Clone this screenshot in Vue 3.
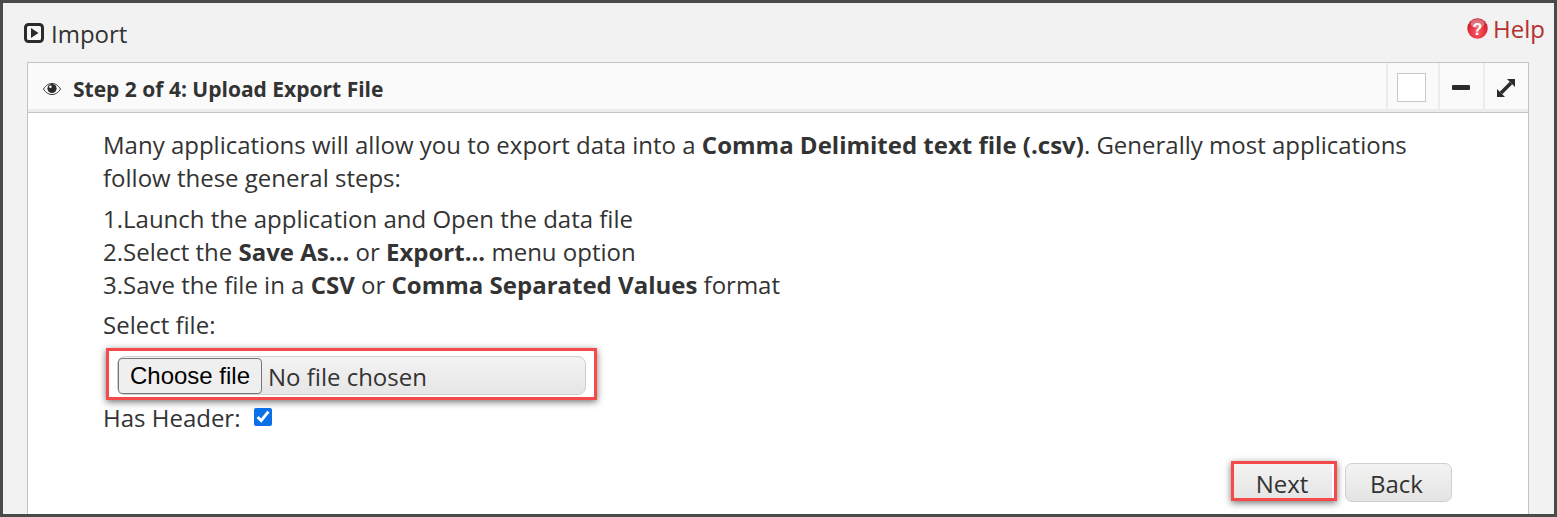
<script setup>
</script>

<template>
  <div class="frame">
    <div class="titlebar">
      <div class="title">
        <svg class="play" width="20" height="20" viewBox="0 0 20 20">
          <rect x="1.5" y="1.5" width="17" height="17" rx="3" fill="#f7f7f7" stroke="#2b2b2b" stroke-width="3"/>
          <path d="M7 5 L14.5 10 L7 15 Z" fill="#2b2b2b"/>
        </svg>
        <span>Import</span>
      </div>
      <div class="help">
        <svg width="21" height="21" viewBox="0 0 21 21">
          <defs>
            <radialGradient id="redball" cx="0.5" cy="0.7" r="0.65">
              <stop offset="0" stop-color="#f7606a"/>
              <stop offset="0.65" stop-color="#e32c3a"/>
              <stop offset="1" stop-color="#bd1c28"/>
            </radialGradient>
          </defs>
          <circle cx="10.5" cy="10.5" r="10.2" fill="url(#redball)"/>
          <ellipse cx="10.5" cy="5.5" rx="7" ry="4.5" fill="#fff" opacity="0.35"/>
          <text x="10.5" y="16.5" text-anchor="middle" class="q">?</text>
        </svg>
        <span>Help</span>
      </div>
    </div>

    <section class="panel">
      <header class="panel-head">
        <div class="head-left">
          <svg width="18" height="12" viewBox="0 0 18 12">
            <path d="M0.5 6 C3 2 6 0.5 9 0.5 C12 0.5 15 2 17.5 6 C15 10 12 11.5 9 11.5 C6 11.5 3 10 0.5 6 Z" fill="#fff" stroke="#2b2b2b" stroke-width="1"/>
            <circle cx="9" cy="5.5" r="4.6" fill="#2b2b2b"/>
            <circle cx="7.4" cy="3.8" r="1.3" fill="#fff"/>
          </svg>
          <h2>Step 2 of 4: Upload Export File</h2>
        </div>
        <div class="tools">
          <div class="tool wide"><span class="square"></span></div>
          <div class="tool shift"><span class="dash"></span></div>
          <div class="tool shift">
            <svg width="20" height="20" viewBox="0 0 20 20">
              <path d="M11 1 H19 V9 Z M9 19 H1 V11 Z" fill="#2b2b2b"/>
              <path d="M5 15 L15 5" stroke="#2b2b2b" stroke-width="3.6" fill="none"/>
            </svg>
          </div>
        </div>
      </header>

      <div class="panel-body">
        <p class="intro">Many applications will allow you to export data into a <b>Comma Delimited text file (.csv)</b>. Generally most applications follow these general steps:</p>
        <div class="steps">
          <div>1.Launch the application and Open the data file</div>
          <div>2.Select the <b>Save As...</b> or <b>Export...</b> menu option</div>
          <div>3.Save the file in a <b>CSV</b> or <b>Comma Separated Values</b> format</div>
        </div>
        <div class="select-label">Select file:</div>
        <div class="highlight file-mark">
          <div class="file-input">
            <button class="choose" type="button">Choose file</button>
            <span class="nofile">No file chosen</span>
          </div>
        </div>
        <div class="header-row">
          <span>Has Header:</span>
          <input class="check" type="checkbox" checked />
        </div>
        <div class="actions">
          <div class="highlight next-mark"><button class="btn plain" type="button">Next</button></div>
          <button class="btn back" type="button">Back</button>
        </div>
      </div>
    </section>
  </div>
</template>

<style>
html, body { margin: 0; padding: 0; overflow: hidden; background: #f2f2f2; }
</style>

<style scoped>
.frame {
  box-sizing: border-box;
  display: flex;
  flex-direction: column;
  width: 1557px;
  height: 517px;
  overflow: hidden;
  border: 3px solid #4a4a4a;
  background: #f2f2f2;
  padding: 0 25px 0 24px;
  font-family: "Open Sans", sans-serif;
  color: #333;
}
.titlebar {
  display: flex;
  flex: none;
  justify-content: space-between;
  height: 59px;
  margin-left: -3px;
  margin-right: -16px;
}
.title {
  display: flex;
  align-items: center;
  gap: 7px;
  height: 60px;
  font-size: 24px;
}
.help {
  display: flex;
  align-items: center;
  gap: 5px;
  height: 51px;
  font-size: 24px;
  color: #b3312f;
}
.q { font: bold 16px "Liberation Sans", sans-serif; fill: #fff; }
.panel {
  flex: 1;
  border: 1px solid #c4c4c4;
  border-bottom: 0;
  background: #fff;
}
.panel-head {
  display: flex;
  justify-content: space-between;
  height: 46px;
  background: #fafafa;
  border-bottom: 3px solid #ececec;
  box-shadow: 0 1px 0 #c4c4c4;
}
.head-left {
  display: flex;
  align-items: center;
  gap: 12px;
  padding: 6px 0 0 15px;
}
h2 {
  margin: 0;
  font-size: 21px;
  font-weight: 700;
  color: #333;
}
.tools { display: flex; }
.tool {
  width: 45px;
  padding-top: 3px;
  display: flex;
  align-items: center;
  justify-content: center;
  border-left: 2px solid #ececec;
  box-sizing: border-box;
}
.wide { width: 52px; padding-right: 3px; }
.shift { padding-right: 2px; }
.square {
  width: 27px;
  height: 27px;
  border: 1px solid #c8c8c8;
  background: #fff;
}
.dash {
  width: 18px;
  height: 5px;
  border-radius: 1px;
  background: #2b2b2b;
}
.panel-body {
  padding: 15px 76px 0 75px;
  font-size: 24px;
  line-height: 33px;
  margin-top: 1px;
}
.intro { margin: 0 0 8px; }
b { font-weight: 700; }
.select-label { margin-top: 7px; }
.highlight {
  border: 3px solid #f44a4a;
  box-shadow: 0 2px 7px rgba(0, 0, 0, 0.55);
  box-sizing: border-box;
}
.file-mark {
  width: 491px;
  height: 52px;
  margin: 7px 0 0 3px;
  padding: 5px 8px 0 8px;
}
.file-input {
  display: flex;
  align-items: flex-end;
  height: 39px;
  border: 1px solid #cfcfcf;
  border-radius: 8px;
  background: linear-gradient(#f3f3f3, #e6e6e6);
  box-sizing: border-box;
}
.choose {
  width: 144px;
  height: 36px;
  padding: 0;
  margin-left: 0;
  border: 1px solid #767676;
  border-radius: 4px;
  background: #efefef;
  color: #000;
  font: 24px "Liberation Sans", sans-serif;
}
.nofile { margin-left: 6px; padding-bottom: 1px; font-size: 24px; }
.header-row {
  display: flex;
  align-items: center;
  gap: 14px;
  height: 33px;
  margin-top: 1px;
}
.check {
  width: 18px;
  height: 18px;
  margin: 0 0 1px;
  accent-color: #0b6fe8;
}
.actions {
  display: flex;
  justify-content: flex-end;
  align-items: flex-start;
  gap: 8px;
  margin: 27px 0 0;
}
.next-mark { width: 106px; height: 40px; overflow: hidden; }
.btn {
  width: 107px;
  height: 39px;
  padding: 2px 0 0;
  border: 1px solid #cfcfcf;
  border-radius: 7px;
  background: linear-gradient(#f3f3f3, #e4e4e4);
  color: #333;
  font: 24px "Open Sans", sans-serif;
}
.back { margin-top: 2px; padding-right: 4px; }
.plain {
  width: 100px;
  height: 39px;
  margin: -1px 0 0 -2px;
  border: 0;
  border-radius: 0;
  display: block;
}
</style>
